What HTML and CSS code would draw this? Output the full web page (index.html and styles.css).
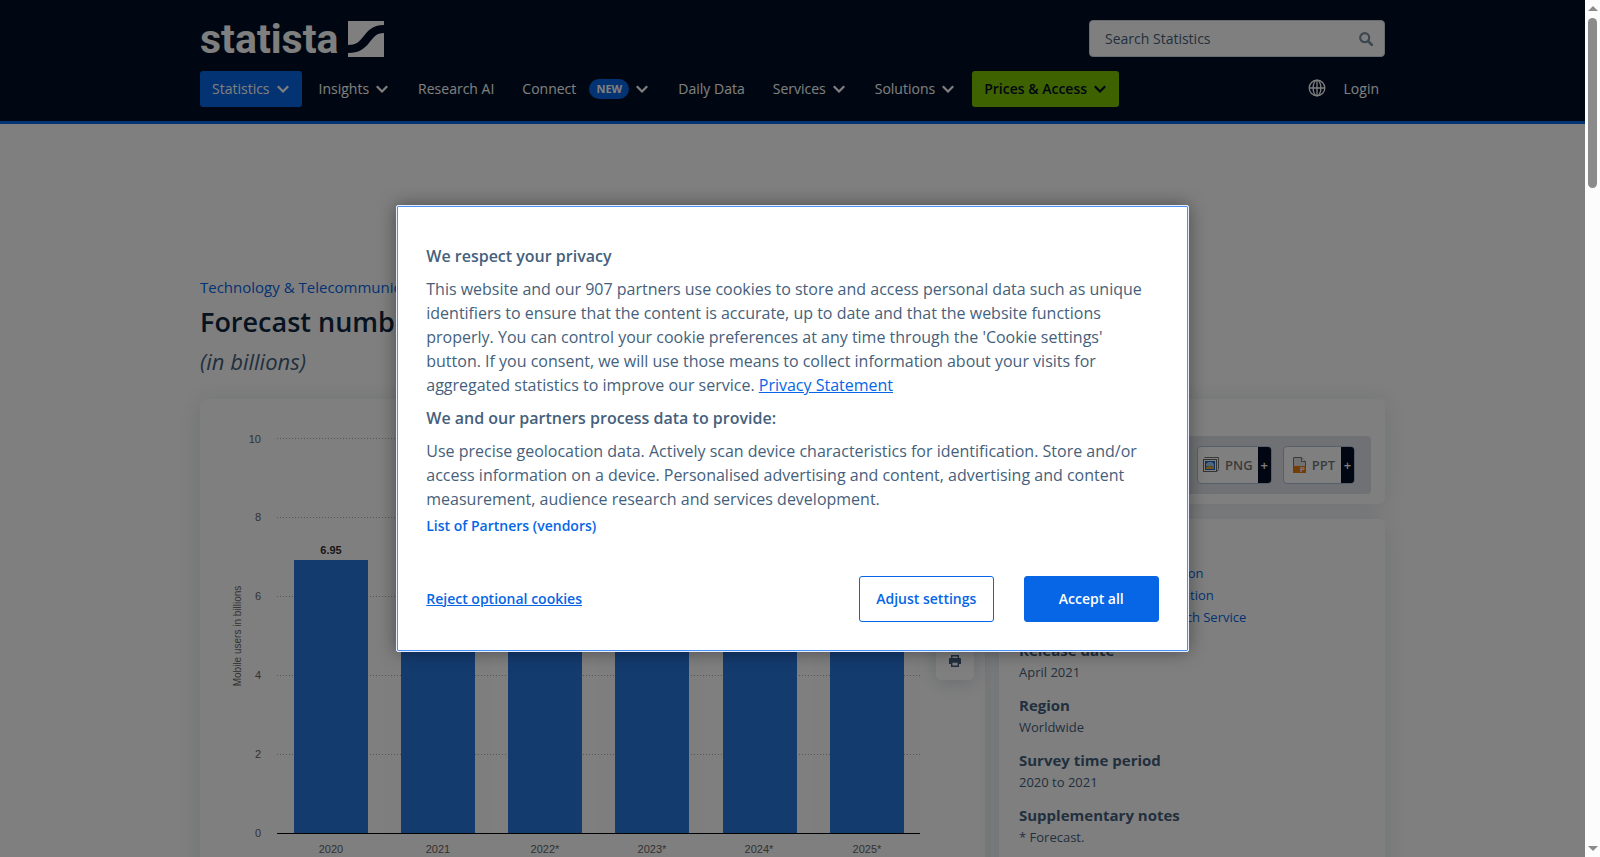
FILE: index.html
```html
<!DOCTYPE html>
<html lang="en">
<head>
  <meta charset="UTF-8">
  <meta name="viewport" content="width=device-width, initial-scale=1.0">
  <title>Forecast number of mobile users worldwide | Statista</title>
  <link rel="stylesheet" href="styles.css">
</head>
<body>
  <svg class="sprite" aria-hidden="true">
    <symbol id="chevron" viewBox="0 0 12 8">
      <path d="M.8 1.300 6 6.500 11.200 1.300" fill="none" stroke="currentColor" stroke-width="2.200"/>
    </symbol>
  </svg>

  <div class="page">
    <header class="header">
      <div class="container">
        <div class="header-top">
          <a class="logo" href="#">
            <span class="logo-text">statista</span>
            <svg class="logo-mark" viewBox="0 0 36 36" aria-hidden="true">
              <path d="M0 0H36V4C24 4 20 10 15 16C11 21 8 24 0 24Z" fill="#fff"/>
              <path d="M36 12V36H0V32C11 32 16 28 21 22C26 16 28 12 36 12Z" fill="#fff"/>
            </svg>
          </a>
          <form class="search">
            <input type="text" id="search" placeholder="Search Statistics" aria-label="Search Statistics">
            <button type="button" aria-label="Search">
              <svg viewBox="0 0 14 14"><circle cx="5.7" cy="5.7" r="4.5" fill="none" stroke="currentColor" stroke-width="2.2"/><path d="M9 9l4 4" stroke="currentColor" stroke-width="2.6" stroke-linecap="round"/></svg>
            </button>
          </form>
        </div>

        <nav class="nav">
          <button class="nav-item active">Statistics <svg class="chevron"><use href="#chevron"/></svg></button>
          <button class="nav-item">Insights <svg class="chevron"><use href="#chevron"/></svg></button>
          <a class="nav-item" href="#">Research AI</a>
          <button class="nav-item">Connect <span class="badge">NEW</span> <svg class="chevron"><use href="#chevron"/></svg></button>
          <a class="nav-item" href="#">Daily Data</a>
          <button class="nav-item">Services <svg class="chevron"><use href="#chevron"/></svg></button>
          <button class="nav-item">Solutions <svg class="chevron"><use href="#chevron"/></svg></button>
          <button class="nav-item prices">Prices &amp; Access <svg class="chevron"><use href="#chevron"/></svg></button>
          <div class="nav-right">
            <button class="globe" aria-label="Language">
              <svg viewBox="0 0 18 18" fill="none" stroke="currentColor" stroke-width="1.3">
                <circle cx="9" cy="9" r="7.8"/>
                <ellipse cx="9" cy="9" rx="3.9" ry="7.8"/>
                <path d="M9 1v16M1 9h16"/>
              </svg>
            </button>
            <a class="login" href="#">Login</a>
          </div>
        </nav>
      </div>
    </header>

    <main class="container main">
      <a class="breadcrumb" href="#">Technology &amp; Telecommunications</a>
      <h1>Forecast number of mobile users worldwide</h1>
      <h2>(in billions)</h2>

      <div class="columns">
        <section class="card chart-card">
          <svg class="chart" viewBox="0 0 720 520" role="img" aria-label="Mobile users in billions">
            <g fill="#fcfcfc">
              <rect x="184" y="40" width="107" height="394"/>
              <rect x="398" y="40" width="107" height="394"/>
              <rect x="613" y="40" width="107" height="394"/>
            </g>
            <g class="grid-lines">
              <path d="M77 39.5H720M77 118.5H720M77 197.5H720M77 276.5H720M77 355.5H720"/>
            </g>
            <g class="bars">
              <rect x="94" y="161" width="74" height="273"/>
              <rect x="201" y="155" width="74" height="279"/>
              <rect x="308" y="148" width="74" height="286"/>
              <rect x="415" y="145" width="74" height="289"/>
              <rect x="523" y="142" width="74" height="292"/>
              <rect x="630" y="139" width="74" height="295"/>
            </g>
            <path class="axis" d="M77 434.5H720"/>
            <text class="value" x="131" y="155">6.95</text>
            <g class="y-labels">
              <text x="61" y="44">10</text>
              <text x="61" y="122">8</text>
              <text x="61" y="201">6</text>
              <text x="61" y="280">4</text>
              <text x="61" y="359">2</text>
              <text x="61" y="438">0</text>
            </g>
            <g class="x-labels">
              <text x="131" y="454">2020</text>
              <text x="238" y="454">2021</text>
              <text x="345" y="454">2022*</text>
              <text x="452" y="454">2023*</text>
              <text x="559" y="454">2024*</text>
              <text x="667" y="454">2025*</text>
            </g>
            <text class="axis-title" transform="translate(41 237) rotate(-90)">Mobile users in billions</text>
          </svg>
          <div class="chart-tools">
            <button class="tool" aria-label="Print">
              <svg viewBox="0 0 12 12"><path d="M2.700 .7h6.600v3H2.700z" fill="none" stroke="currentColor" stroke-width="1.400"/><path d="M1 3h10a1 1 0 0 1 1 1v5H0V4a1 1 0 0 1 1-1z" fill="currentColor"/><path d="M2.700 7h6.600v4.300H2.700z" fill="#fff" stroke="currentColor" stroke-width="1.400"/></svg>
            </button>
          </div>
        </section>

        <aside class="sidebar">
          <section class="card download">
            <div class="download-box">
              <button class="file">
                <span class="file-name">
                  <svg viewBox="0 0 16 16">
                    <path d="M1.500 .5h14v12" fill="none" stroke="#777"/>
                    <path d="M15.500 13.500h-2" stroke="#777"/>
                    <rect x=".5" y="2.500" width="13" height="12" fill="#fff" stroke="#666"/>
                    <rect x="2" y="4" width="10" height="9" fill="#1d62c4"/>
                    <path d="M3 9V7l2-2h4l2 2v2z" fill="#9ccbf5"/>
                    <path d="M3 10l3-1 3 .5 2-1V12H3z" fill="#e5b030"/>
                  </svg>
                  PNG
                </span>
                <span class="plus">+</span>
              </button>
              <button class="file">
                <span class="file-name">
                  <svg class="ppt" viewBox="0 0 16 16">
                    <path d="M2.500 .5h8l4 4v11h-12z" fill="#e3e3e3" stroke="#777"/>
                    <path d="M10.500 .5v4h4" fill="#fff" stroke="#777"/>
                    <path d="M2 9h13v7H2z" fill="#e77a10"/>
                    <text x="9" y="15">P</text>
                  </svg>
                  PPT
                </span>
                <span class="plus">+</span>
              </button>
            </div>
          </section>

          <section class="card details">
            <dl>
              <dt>Source</dt>
              <dd><a href="#">Show sources information</a></dd>
              <dd><a href="#">Show publisher information</a></dd>
              <dd><a href="#">Use Ask Statista Research Service</a></dd>
              <dt>Release date</dt>
              <dd>April 2021</dd>
              <dt>Region</dt>
              <dd>Worldwide</dd>
              <dt>Survey time period</dt>
              <dd>2020 to 2021</dd>
              <dt>Supplementary notes</dt>
              <dd>* Forecast.</dd>
            </dl>
          </section>
        </aside>
      </div>
    </main>

    <div class="overlay">
      <div class="modal" role="dialog" aria-modal="true" aria-labelledby="privacy-title">
        <h3 id="privacy-title">We respect your privacy</h3>
        <p>This website and our 907 partners use cookies to store and access personal data such as unique identifiers to ensure that the content is accurate, up to date and that the website functions properly. You can control your cookie preferences at any time through the 'Cookie settings' button. If you consent, we will use those means to collect information about your visits for aggregated statistics to improve our service. <a href="#">Privacy Statement</a></p>
        <h3>We and our partners process data to provide:</h3>
        <p>Use precise geolocation data. Actively scan device characteristics for identification. Store and/or access information on a device. Personalised advertising and content, advertising and content measurement, audience research and services development.</p>
        <button class="vendors">List of Partners (vendors)</button>
        <div class="actions">
          <button class="reject">Reject optional cookies</button>
          <button class="btn">Adjust settings</button>
          <button class="btn accept">Accept all</button>
        </div>
      </div>
    </div>
  </div>

  <div class="scrollbar" aria-hidden="true">
    <span class="arrow up"></span>
    <span class="thumb"></span>
    <span class="arrow down"></span>
  </div>
</body>
</html>
```

FILE: styles.css
```css
* {
  box-sizing: border-box;
}
body {
  margin: 0;
  height: 100vh;
  display: flex;
  overflow: hidden;
  font-family: "Open Sans", sans-serif;
  font-size: 14px;
  color: #455f7c;
  background: #fff;
}
button {
  font: inherit;
  color: inherit;
  background: none;
  border: 0;
  padding: 0;
  cursor: pointer;
}
a {
  color: #0666e5;
  text-decoration: none;
}
svg {
  display: block;
}
.sprite {
  position: absolute;
  width: 0;
  height: 0;
}
.page {
  position: relative;
  flex: 1;
  min-width: 0;
  overflow: hidden;
}
.container {
  width: 100%;
  max-width: 1225px;
  margin: 0 auto;
  padding: 0 20px;
}

/* header */
.header {
  background: #000f24;
  border-bottom: 3px solid #0666e5;
  padding: 20px 0 14px;
}
.header-top {
  display: flex;
  justify-content: space-between;
  height: 37px;
}
.logo {
  display: flex;
  align-items: center;
  gap: 10px;
  color: #fff;
}
.logo-text {
  font-family: Roboto, "Liberation Sans", sans-serif;
  font-weight: 700;
  font-size: 41px;
  line-height: 40px;
}
.logo-mark {
  width: 36px;
  height: 36px;
}
.search {
  display: flex;
  width: 296px;
  background: #fff;
  border: 1px solid #cfd6de;
  border-radius: 4px;
}
.search input {
  flex: 1;
  min-width: 0;
  border: 0;
  background: none;
  padding: 0 15px;
  font: inherit;
}
.search input::placeholder {
  color: #455f7c;
  opacity: 1;
}
.search button {
  color: #7a8fa0;
  padding: 0 11px;
}
.search button svg {
  width: 14px;
  height: 14px;
}
.nav {
  display: flex;
  gap: 5px;
  margin-top: 14px;
}
.nav-item {
  display: flex;
  align-items: center;
  gap: 7px;
  height: 36px;
  padding: 0 12px 2px;
  border-radius: 3px;
  color: #fff;
}
a.nav-item {
  padding-right: 11px;
}
.nav-item.active {
  background: #0666e5;
}
.nav-item.prices {
  background: #7dc400;
  color: #000f24;
  font-weight: 600;
}
.chevron {
  width: 12px;
  height: 8px;
  margin: 2px 1px 0 0;
}
.badge {
  margin: 2px 0 0 6px;
  width: 40px;
  line-height: 20px;
  border-radius: 10px;
  background: #0666e5;
  font-size: 11px;
  font-weight: 700;
  text-align: center;
}
.nav-right {
  display: flex;
  align-items: center;
  gap: 18px;
  margin-left: auto;
  padding: 0 6px 2px 0;
  color: #fff;
}
.globe svg {
  width: 18px;
  height: 18px;
}
.login {
  color: #fff;
}

/* content */
.main {
  padding-top: 151px;
}
.breadcrumb {
  display: block;
  font-size: 15px;
  line-height: 24px;
}
h1 {
  margin: 4px 0;
  font-size: 27px;
  font-weight: 600;
  line-height: 38px;
  color: #0f2741;
}
h2 {
  margin: 0 0 22px;
  font-size: 22px;
  font-weight: 400;
  font-style: italic;
  line-height: 32px;
}
.columns {
  display: flex;
  gap: 14px;
}
.card {
  background: #fff;
  border-radius: 6px;
  box-shadow: 0 2px 24px rgba(15, 39, 65, 0.13);
}
.chart-card {
  flex: 1;
  display: flex;
  align-items: flex-start;
  gap: 16px;
  min-width: 0;
}
.chart {
  flex: 1;
  min-width: 0;
}
.chart text {
  font-family: "Liberation Sans", Arial, sans-serif;
  font-size: 11px;
  fill: #666;
}
.chart .axis-title {
  font-size: 10px;
}
.grid-lines {
  fill: none;
  stroke: #aaa;
  stroke-dasharray: 1 2;
}
.bars {
  fill: #2876dd;
}
.axis {
  stroke: #000;
}
.chart .value {
  font-weight: 700;
  fill: #333;
}
.value, .x-labels, .axis-title {
  text-anchor: middle;
}
.y-labels {
  text-anchor: end;
}
.chart-tools {
  display: flex;
  flex-direction: column;
  padding: 243px 11px 0 0;
}
.tool {
  display: flex;
  align-items: center;
  justify-content: center;
  width: 38px;
  height: 38px;
  background: #fff;
  border-radius: 5px;
  box-shadow: 0 2px 20px rgba(15, 39, 65, 0.2);
}
.tool svg {
  width: 12px;
  height: 12px;
}
.sidebar {
  flex: 0 0 386px;
  display: flex;
  flex-direction: column;
  gap: 15px;
}
.download {
  padding: 37px 14px 10px;
}
.download-box {
  display: flex;
  justify-content: flex-end;
  gap: 11px;
  padding: 10px 16px;
  border-radius: 4px;
  background: #dfe3e9;
}
.file {
  display: flex;
  height: 38px;
  background: #fff;
  border: 1px solid #aebfd4;
  border-radius: 4px;
  overflow: hidden;
  font-size: 13px;
  font-weight: 600;
  color: #777;
}
.file-name {
  display: flex;
  align-items: center;
  gap: 6px;
  padding: 0 5px;
}
.file-name svg {
  width: 16px;
  height: 16px;
}
.file:last-child .file-name {
  gap: 5px;
  padding: 0 6px 0 7px;
}
.ppt text {
  font-family: "Liberation Sans", Arial, sans-serif;
  font-size: 7px;
  font-weight: 700;
  fill: #fff;
}
.plus {
  width: 13px;
  line-height: 36px;
  background: #000f24;
  color: #fff;
  text-align: center;
}
.details {
  flex: 1;
  padding: 21px 20px;
}
dl {
  margin: 0;
  font-size: 13px;
  line-height: 22px;
}
dt {
  font-size: 15px;
  font-weight: 700;
}
dd {
  margin: 0;
}
dd + dt {
  margin-top: 11px;
}
dd a {
  padding-left: 26px;
}

/* cookie dialog */
.overlay {
  position: absolute;
  inset: 0;
  display: flex;
  align-items: center;
  justify-content: center;
  background: rgba(0, 0, 0, 0.5);
}
.modal {
  width: 50%;
  padding: 38px 29px 29px;
  background: #fff;
  border: 1px solid #e6effb;
  border-radius: 2px;
  outline: 1px solid #4791f5;
  outline-offset: -2px;
  box-shadow: 0 0 18px rgba(0, 0, 0, 0.4);
  font-size: 16px;
  line-height: 24px;
}
.modal h3 {
  margin: 0 0 9px;
  font-size: 16px;
  font-weight: 600;
}
.modal p {
  margin: 0 0 9px;
}
.modal p a {
  text-decoration: underline;
}
.modal p:nth-of-type(2) {
  margin-bottom: 5px;
}
.vendors, .reject, .btn {
  font-size: 14px;
  font-weight: 600;
  line-height: 20px;
  color: #0666e5;
}
.vendors {
  display: block;
}
.actions {
  display: flex;
  align-items: center;
  gap: 30px;
  margin-top: 40px;
}
.reject {
  margin-right: auto;
  text-decoration: underline;
}
.btn {
  width: 135px;
  height: 46px;
  border: 1px solid #0666e5;
  border-radius: 3px;
  background: #fff;
}
.btn.accept {
  background: #0666e5;
  color: #fff;
}

/* scrollbar */
.scrollbar {
  display: flex;
  flex-direction: column;
  align-items: center;
  width: 15px;
  padding: 6px 0;
  background: #fcfcfc;
}
.arrow {
  border: 5px solid transparent;
}
.arrow.up {
  border-top: 0;
  border-bottom-color: #8b8b8b;
}
.arrow.down {
  margin-top: auto;
  border-bottom: 0;
  border-top-color: #8b8b8b;
}
.thumb {
  width: 9px;
  height: 170px;
  margin-top: 7px;
  border-radius: 5px;
  background: #8b8b8b;
}
```
